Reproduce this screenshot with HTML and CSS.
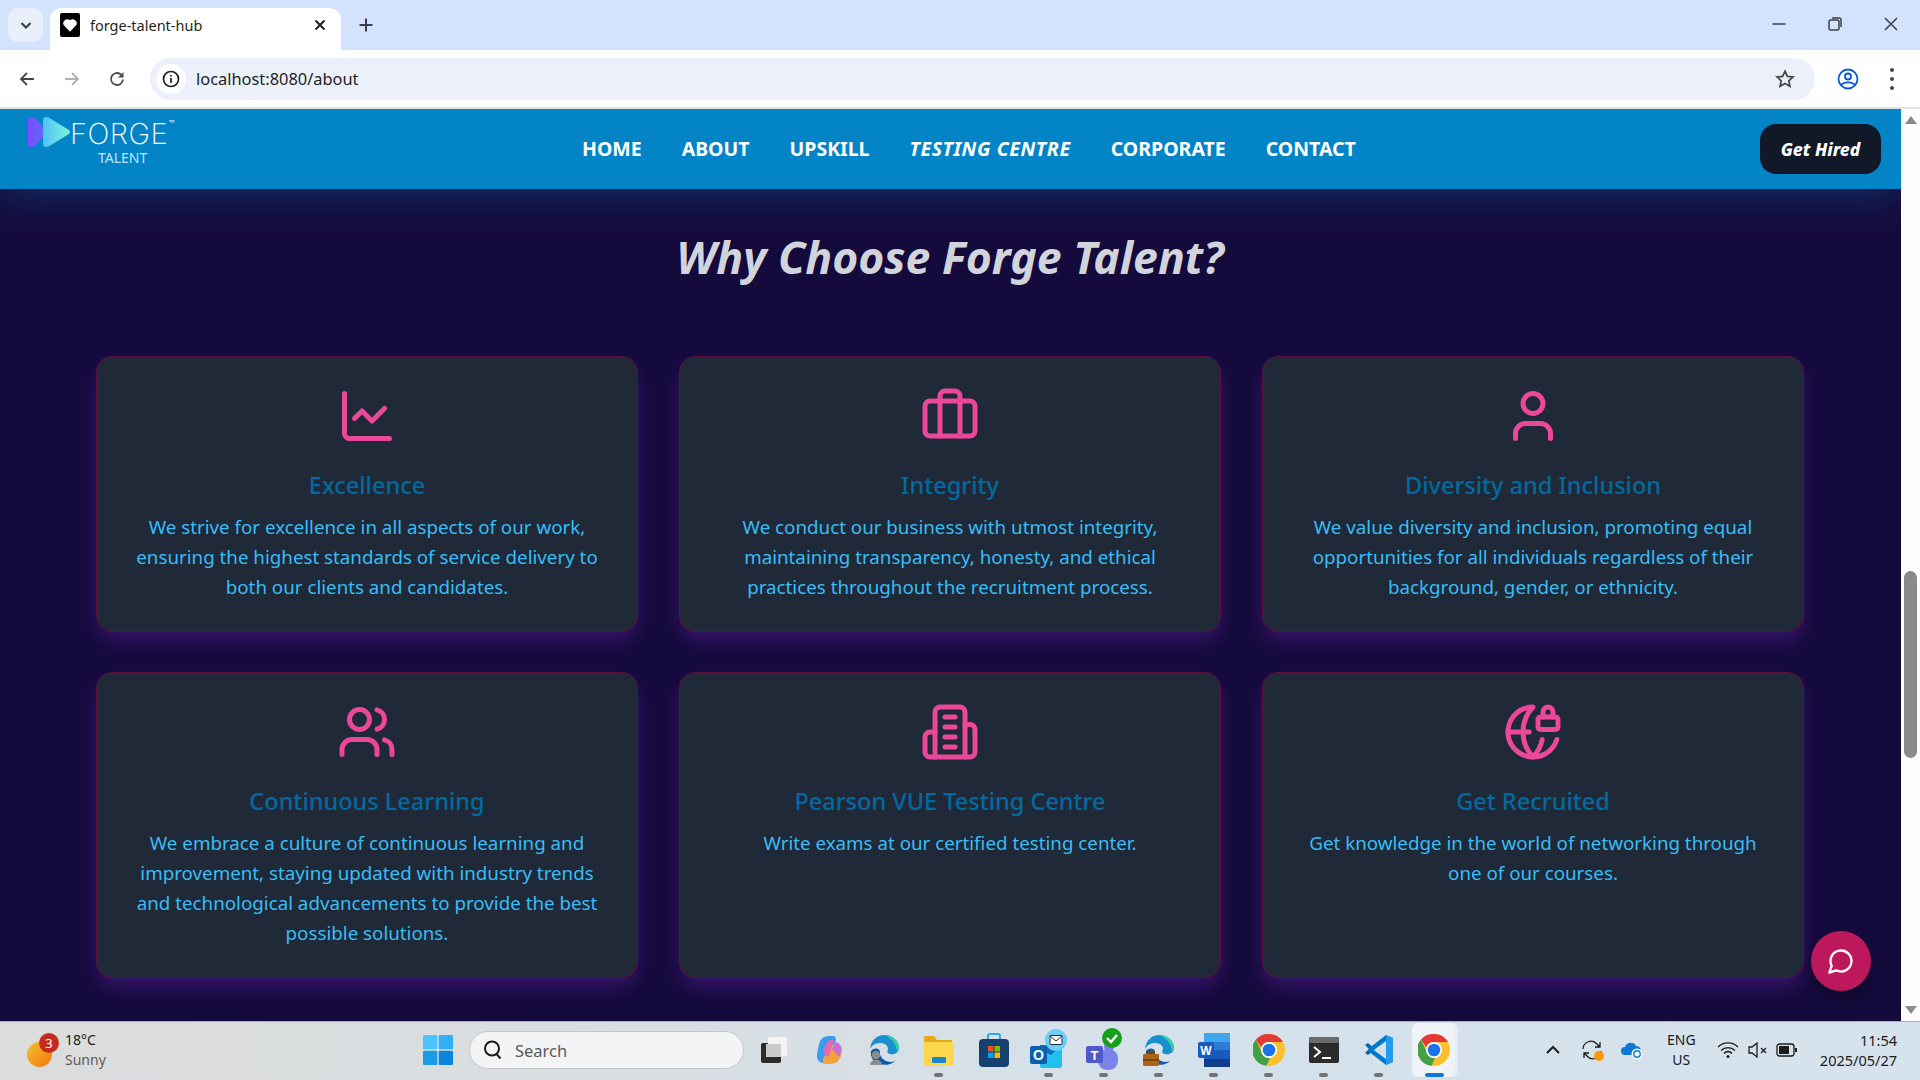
FILE: index.html
```html
<!DOCTYPE html>
<html lang="en">
<head>
    <meta charset="UTF-8">
    <title>forge-talent-hub</title>
    <link rel="stylesheet" href="styles.css">
</head>
<body>

    <div class="tabstrip">
        <div class="tab-search"><svg width="16" height="16" viewBox="0 0 16 16" class="ic-dark"><path d="M3.5 6l4.5 4.5L12.500 6"/></svg></div>
        <div class="tab">
            <div class="favicon"><svg width="16" height="16" viewBox="0 0 24 24"><path fill="#fff" d="M12 22 2.800 12.500A6 6 0 0 1 12 5a6 6 0 0 1 9.200 7.500z"/></svg></div>
            <span class="tab-title">forge-talent-hub</span>
            <svg class="tab-close" width="14" height="14" viewBox="0 0 14 14"><path d="M2.500 2.500l9 9M11.500 2.500l-9 9"/></svg>
        </div>
        <svg class="tab-new" width="16" height="16" viewBox="0 0 16 16"><path d="M8 1.500v13M1.500 8h13"/></svg>
        <div class="window-controls">
            <svg width="16" height="16" viewBox="0 0 16 16"><path d="M1.500 8h13"/></svg>
            <svg width="16" height="16" viewBox="0 0 16 16"><rect x="2" y="4" width="10" height="10" rx="2"/><path d="M5 2h7a2 2 0 0 1 2 2v7"/></svg>
            <svg width="16" height="16" viewBox="0 0 16 16"><path d="M2 2l12 12M14 2L2 14"/></svg>
        </div>
    </div>

    <div class="toolbar">
        <svg class="nav-ic" width="18" height="18" viewBox="0 0 18 18"><path d="M16 9H3M9 3L3 9l6 6"/></svg>
        <svg class="nav-ic nav-off" width="18" height="18" viewBox="0 0 18 18"><path d="M2 9h13M9 3l6 6-6 6"/></svg>
        <svg class="nav-ic" width="18" height="18" viewBox="0 0 18 18"><path d="M15 9.500A6 6 0 1 1 13 4.500"/><path class="solid" d="M15.500 2v5.500H10z"/></svg>
        <div class="omnibox">
            <div class="site-info"><svg width="20" height="20" viewBox="0 0 20 20"><circle cx="10" cy="10" r="7.500"/><path d="M10 9v5M10 6v1.500"/></svg></div>
            <span class="url">localhost:8080/about</span>
            <svg class="star" width="22" height="22" viewBox="0 0 24 24"><path d="M12 3.500l2.600 5.600 6.100.7-4.500 4.100 1.200 6L12 17l-5.400 2.900 1.200-6-4.500-4.100 6.100-.7z"/></svg>
        </div>
        <svg class="profile" width="22" height="22" viewBox="0 0 22 22"><circle cx="11" cy="11" r="9.500"/><circle cx="11" cy="8.500" r="3"/><path d="M4.500 17c2-3.500 11-3.500 13 0"/></svg>
        <div class="menu-dots"><i></i><i></i><i></i></div>
    </div>

    <div class="viewport">
        <div class="page">
            <header class="site-header">
                <div class="logo">
                    <div class="logo-top">
                        <svg width="46" height="32" viewBox="0 0 46 32">
                            <defs>
                                <linearGradient id="lg1" x1="0" y1="0" x2="1" y2="0"><stop offset="0" stop-color="#7c4dff"/><stop offset="1" stop-color="#5a6cf5"/></linearGradient>
                                <linearGradient id="lg2" x1="0" y1="0" x2="1" y2="0"><stop offset="0" stop-color="#4fc3f7"/><stop offset="1" stop-color="#7cf0d8"/></linearGradient>
                            </defs>
                            <path fill="url(#lg1)" d="M1 4q0-3 3-3 3 0 5 2l9 10q2 3 0 6L9 29q-2 2-5 2-3 0-3-3z"/>
                            <path fill="url(#lg2)" d="M16 4q0-3 3-3 3 0 5 2l18 11q2 2 0 4L24 29q-2 2-5 2-3 0-3-3z"/>
                        </svg>
                        <span class="logo-forge">FORGE</span>
                        <span class="logo-tm">™</span>
                    </div>
                    <div class="logo-talent">TALENT</div>
                </div>
                <nav class="main-nav">
                    <a href="#">HOME</a>
                    <a href="#">ABOUT</a>
                    <a href="#">UPSKILL</a>
                    <a href="#" class="current">TESTING CENTRE</a>
                    <a href="#">CORPORATE</a>
                    <a href="#">CONTACT</a>
                </nav>
                <button class="hire-btn">Get Hired</button>
            </header>

            <section class="why">
                <h2>Why Choose Forge Talent?</h2>
                <div class="card-grid">
                    <div class="card">
                        <svg class="card-ic" viewBox="0 0 24 24"><path d="M3 3v16a2 2 0 0 0 2 2h16"/><path d="m19 9-5 5-4-4-3 3"/></svg>
                        <h3>Excellence</h3>
                        <p>We strive for excellence in all aspects of our work, ensuring the highest standards of service delivery to both our clients and candidates.</p>
                    </div>
                    <div class="card">
                        <svg class="card-ic" viewBox="0 0 24 24"><path d="M16 20V4a2 2 0 0 0-2-2h-4a2 2 0 0 0-2 2v16"/><rect width="20" height="14" x="2" y="6" rx="2"/></svg>
                        <h3>Integrity</h3>
                        <p>We conduct our business with utmost integrity, maintaining transparency, honesty, and ethical practices throughout the recruitment process.</p>
                    </div>
                    <div class="card">
                        <svg class="card-ic" viewBox="0 0 24 24"><path d="M19 21v-2a4 4 0 0 0-4-4H9a4 4 0 0 0-4 4v2"/><circle cx="12" cy="7" r="4"/></svg>
                        <h3>Diversity and Inclusion</h3>
                        <p>We value diversity and inclusion, promoting equal opportunities for all individuals regardless of their background, gender, or ethnicity.</p>
                    </div>
                    <div class="card">
                        <svg class="card-ic" viewBox="0 0 24 24"><path d="M16 21v-2a4 4 0 0 0-4-4H6a4 4 0 0 0-4 4v2"/><circle cx="9" cy="7" r="4"/><path d="M22 21v-2a4 4 0 0 0-3-3.870"/><path d="M16 3.130a4 4 0 0 1 0 7.750"/></svg>
                        <h3>Continuous Learning</h3>
                        <p>We embrace a culture of continuous learning and improvement, staying updated with industry trends and technological advancements to provide the best possible solutions.</p>
                    </div>
                    <div class="card">
                        <svg class="card-ic" viewBox="0 0 24 24"><path d="M6 22V4a2 2 0 0 1 2-2h8a2 2 0 0 1 2 2v18Z"/><path d="M6 12H4a2 2 0 0 0-2 2v6a2 2 0 0 0 2 2h2"/><path d="M18 9h2a2 2 0 0 1 2 2v9a2 2 0 0 1-2 2h-2"/><path d="M10 6h4M10 10h4M10 14h4M10 18h4"/></svg>
                        <h3>Pearson VUE Testing Centre</h3>
                        <p>Write exams at our certified testing center.</p>
                    </div>
                    <div class="card">
                        <svg class="card-ic" viewBox="0 0 24 24"><path d="M15.686 15A14.500 14.500 0 0 1 12 22a14.500 14.500 0 0 1 0-20 10 10 0 1 0 9.542 13"/><path d="M2 12h8.500"/><path d="M20 6V4a2 2 0 1 0-4 0v2"/><rect width="8" height="5" x="14" y="6" rx="1"/></svg>
                        <h3>Get Recruited</h3>
                        <p>Get knowledge in the world of networking through one of our courses.</p>
                    </div>
                </div>
            </section>

            <button class="chat-btn"><svg width="28" height="28" viewBox="0 0 24 24"><path d="M7.900 20A9 9 0 1 0 4 16.100L2 22Z"/></svg></button>
        </div>
        <div class="scrollbar">
            <svg width="14" height="10" viewBox="0 0 14 10"><path d="M7 1l6 8H1z"/></svg>
            <div class="scroll-track"><div class="scroll-thumb"></div></div>
            <svg width="14" height="10" viewBox="0 0 14 10"><path d="M1 1h12L7 9z"/></svg>
        </div>
    </div>

    <footer class="taskbar">
        <div class="weather">
            <div class="weather-ic"><span class="sun"></span><span class="badge">3</span></div>
            <div class="weather-text"><span>18°C</span><span class="muted">Sunny</span></div>
        </div>
        <svg class="win-logo" width="30" height="30" viewBox="0 0 30 30">
            <rect width="14.300" height="14.300" rx="1" fill="#4cc2ff"/><rect x="15.700" width="14.300" height="14.300" rx="1" fill="#33b0f5"/>
            <rect y="15.700" width="14.300" height="14.300" rx="1" fill="#1a9be8"/><rect x="15.700" y="15.700" width="14.300" height="14.300" rx="1" fill="#0a84dc"/>
        </svg>
        <div class="search-box">
            <svg width="22" height="22" viewBox="0 0 22 22"><circle cx="10" cy="9.500" r="7"/><path d="M14.500 15l4 4.500"/></svg>
            <span>Search</span>
        </div>
        <div class="apps">
            <div class="app"><svg width="28" height="28" viewBox="0 0 28 28"><rect x="1" y="7" width="20" height="20" rx="2" fill="#2b2b2b"/><rect x="8" y="1" width="19" height="19" rx="2" fill="#f4f4f4"/><rect x="6" y="8" width="15" height="13" fill="#c9c9c9"/></svg></div>
            <div class="app"><svg width="32" height="32" viewBox="0 0 32 32"><path fill="#3b9df0" d="M6 10q2-8 10-8h4q3 0 3 4L17 24q-2 6-8 5-6-2-5-9z"/><path fill="#f7a13c" d="M13 30q-4 0-3-5l4-9q2-5 6-5h6q4 1 3 7-2 12-11 12z"/><path fill="#e66ab0" d="M10 18q2-8 7-12h4l-6 18z"/><path fill="#c66fe0" d="M23 8q5 1 5 7 0 5-2 8l-7-8z"/></svg></div>
            <div class="app"><svg width="32" height="32" viewBox="0 0 32 32"><path fill="#1a8fd0" d="M2 15C3 6 9 1 16 1c9 0 15 6 15 13 0 5-5 7-9 6-3 0-3-3-2-5 0-4-4-6-8-6-4 0-8 2-10 6z"/><path fill="#37d0a0" d="M16 1c9 0 15 6 15 13 0 2-1 3-2 4 0-8-6-15-13-17z"/><path fill="#0c59a4" d="M12 30c-6-1-10-7-9-13 3-4 9-3 9 1-1 5 5 10 11 10 2 0 4-1 5-2-3 4-10 6-16 4z"/><circle cx="8" cy="21" r="4" fill="#8d8d8d"/><path fill="#8d8d8d" d="M2 31c0-7 12-7 12 0z"/></svg></div>
            <div class="app dot"><svg width="30" height="32" viewBox="0 0 30 32"><path fill="#e8a917" d="M0 4q0-2 2-2h8l3 4h15v8H0z"/><path fill="#fcd84e" d="M0 8h28q2 0 2 2v20q0 2-2 2H2q-2 0-2-2z"/><rect x="8" y="23" width="14" height="6" rx="1" fill="#1a86d0"/></svg></div>
            <div class="app"><svg width="30" height="34" viewBox="0 0 30 34"><path fill="none" stroke="#35a7e8" stroke-width="2" d="M9 8V3q0-2 2-2h8q2 0 2 2v5"/><rect y="6" width="30" height="28" rx="4" fill="#15406f"/><rect x="9" y="13" width="5.500" height="5.500" fill="#f25022"/><rect x="15.500" y="13" width="5.500" height="5.500" fill="#7fba00"/><rect x="9" y="19.500" width="5.500" height="5.500" fill="#00a4ef"/><rect x="15.500" y="19.500" width="5.500" height="5.500" fill="#ffb900"/></svg></div>
            <div class="app dot"><svg width="38" height="42" viewBox="0 0 38 42"><path fill="#21c0ee" d="M10 24l22-9v22q0 2-2 2H12q-2 0-2-2z"/><path fill="#0c6fc0" d="M10 16h14l8 0-11 10-11-5z"/><rect y="17" width="17" height="18" rx="2" fill="#0a5fb0"/><text class="ms-letter" x="8.500" y="31" font-size="14">O</text><circle cx="26" cy="11" r="11" fill="#6ccdf7"/><rect x="20" y="6.500" width="12" height="9" rx="1" fill="#fff" stroke="#1b2a3a" stroke-width="1"/><path d="M20 7l6 5 6-5" fill="none" stroke="#1b2a3a" stroke-width="1"/></svg></div>
            <div class="app dot"><svg width="38" height="44" viewBox="0 0 38 44"><circle cx="24" cy="19" r="5" fill="#7b83eb"/><rect x="13" y="21" width="20" height="21" rx="9" fill="#7b83eb"/><rect x="1" y="18" width="17" height="17" rx="2" fill="#5059c9"/><text class="ms-letter" x="9.500" y="31.500" font-size="13">T</text><circle cx="27" cy="10" r="10" fill="#14a01a"/><path d="M22 10l4 4 6-7" fill="none" stroke="#fff" stroke-width="2.400"/></svg></div>
            <div class="app dot"><svg width="32" height="32" viewBox="0 0 32 32"><path fill="#1a8fd0" d="M2 15C3 6 9 1 16 1c9 0 15 6 15 13 0 5-5 7-9 6-3 0-3-3-2-5 0-4-4-6-8-6-4 0-8 2-10 6z"/><path fill="#37d0a0" d="M16 1c9 0 15 6 15 13 0 2-1 3-2 4 0-8-6-15-13-17z"/><path fill="#0c59a4" d="M12 30c-6-1-10-7-9-13 3-4 9-3 9 1-1 5 5 10 11 10 2 0 4-1 5-2-3 4-10 6-16 4z"/><rect x="0" y="20" width="16" height="12" rx="1" fill="#a9651c"/><path stroke="#7a4412" stroke-width="2" fill="none" d="M5 20v-2h6v2M0 26h16"/></svg></div>
            <div class="app dot"><svg width="32" height="34" viewBox="0 0 32 34"><rect x="6" width="26" height="34" rx="2" fill="#2b7cd3"/><rect x="6" width="26" height="9" fill="#41a5ee"/><rect x="6" y="17" width="26" height="9" fill="#185abd"/><rect x="6" y="26" width="26" height="8" fill="#103f91"/><rect y="9" width="16" height="16" rx="2" fill="#185abd"/><text class="ms-letter" x="8" y="22" font-size="12">W</text></svg></div>
            <div class="app dot"><svg class="chrome" width="32" height="32" viewBox="0 0 32 32"><circle cx="16" cy="16" r="16" fill="#fbc02d"/><path fill="#e53935" d="M16 0a16 16 0 0 1 13.900 8H16a8 8 0 0 0-7.600 5.500L3 5.500A16 16 0 0 1 16 0z"/><path fill="#43a047" d="M3 5.500l6.500 14.500a8 8 0 0 0 7.500 4l-3.500 7.800A16 16 0 0 1 3 5.500z"/><circle cx="16" cy="16" r="8" fill="#fff"/><circle cx="16" cy="16" r="6.300" fill="#1a73e8"/></svg></div>
            <div class="app dot"><svg width="30" height="26" viewBox="0 0 30 26"><rect width="30" height="26" rx="2" fill="#2b2b2b"/><rect width="30" height="6" rx="2" fill="#6b6b6b"/><path d="M5 10l6 5-6 5" fill="none" stroke="#fff" stroke-width="2"/><path d="M13 21h9" stroke="#fff" stroke-width="2"/></svg></div>
            <div class="app dot"><svg width="30" height="30" viewBox="0 0 30 30"><path fill="#0065a9" d="M1 10l3-2 7 6-7 6-3-2 4-4z"/><path fill="#007acc" d="M22 0l7 3v24l-7 3L4 16l3-3 15 11V6L7 17l-3-3z"/><path fill="#1f9cf0" d="M22 0l7 3v24l-7 3z"/></svg></div>
            <div class="app active"><svg class="chrome" width="32" height="32" viewBox="0 0 32 32"><circle cx="16" cy="16" r="16" fill="#fbc02d"/><path fill="#e53935" d="M16 0a16 16 0 0 1 13.900 8H16a8 8 0 0 0-7.600 5.500L3 5.500A16 16 0 0 1 16 0z"/><path fill="#43a047" d="M3 5.500l6.500 14.500a8 8 0 0 0 7.500 4l-3.500 7.800A16 16 0 0 1 3 5.500z"/><circle cx="16" cy="16" r="8" fill="#fff"/><circle cx="16" cy="16" r="6.300" fill="#1a73e8"/></svg></div>
        </div>
        <div class="tray">
            <svg class="tray-ic" width="16" height="16" viewBox="0 0 16 16"><path d="M2 11l6-6 6 6"/></svg>
            <div class="tray-sync"><svg class="tray-ic" width="22" height="22" viewBox="0 0 22 22"><path d="M2 10a8 8 0 0 1 14-5l3 3M19 3v5h-5M20 12a8 8 0 0 1-14 5l-3-3M3 19v-5h5"/></svg><i></i></div>
            <svg width="22" height="20" viewBox="0 0 22 20"><path fill="#0f78d4" d="M4 15a4 4 0 0 1 0-8 6 6 0 0 1 11-1 5 5 0 0 1 3 9z"/><circle cx="16" cy="14" r="5.500" fill="#fff"/><circle cx="16" cy="14" r="3.200" fill="none" stroke="#0f78d4" stroke-width="1.400"/></svg>
            <div class="lang"><span>ENG</span><span>US</span></div>
            <svg class="tray-ic" width="22" height="18" viewBox="0 0 22 18"><path d="M1 6a14 14 0 0 1 20 0M4 9.500a10 10 0 0 1 14 0M7 12.500a5 5 0 0 1 8 0"/><circle class="solid" cx="11" cy="15.500" r="1.500"/></svg>
            <svg class="tray-ic" width="20" height="18" viewBox="0 0 20 18"><path d="M1 6v6h3l5 4V2L4 6zM13 7l5 5M18 7l-5 5"/></svg>
            <svg class="tray-ic" width="22" height="14" viewBox="0 0 22 14"><rect x="1" y="1" width="17" height="12" rx="2.500"/><rect class="solid" x="3" y="3" width="10" height="8"/><rect class="solid" x="19" y="5" width="2" height="4"/></svg>
            <div class="clock"><span>11:54</span><span>2025/05/27</span></div>
        </div>
    </footer>

</body>
</html>
```

FILE: styles.css
```css
* {
    box-sizing: border-box;
}
html, body {
    margin: 0;
    height: 100%;
}
body {
    width: 1920px;
    height: 1080px;
    overflow: hidden;
    display: flex;
    flex-direction: column;
    font-family: "Noto Sans", "Open Sans", sans-serif;
    background: #fff;
}
svg {
    display: block;
    flex: none;
}

/* browser tabs */
.tabstrip {
    height: 50px;
    background: #d3e3fd;
    display: flex;
    align-items: flex-end;
    padding-left: 8px;
}
.tabstrip svg path, .tabstrip svg rect {
    fill: none;
    stroke: #3c4043;
    stroke-width: 1.500;
}
.tabstrip .favicon svg path {
    fill: #fff;
    stroke: none;
}
.tab-search {
    width: 35px;
    height: 34px;
    margin-bottom: 8px;
    border-radius: 10px;
    background: #e9effb;
    display: flex;
    align-items: center;
    justify-content: center;
}
.tabstrip .ic-dark path {
    stroke-width: 2.200;
}
.tab {
    width: 291px;
    height: 42px;
    margin-left: 7px;
    background: #fff;
    border-radius: 12px 12px 0 0;
    display: flex;
    align-items: center;
    padding: 0 14px 8px 10px;
}
.favicon {
    width: 20px;
    height: 24px;
    background: #000;
    border-radius: 2px;
    display: flex;
    align-items: center;
    justify-content: center;
}
.tab-title {
    flex: 1;
    margin-left: 10px;
    font-size: 14.500px;
    color: #1f1f1f;
}
.tabstrip .tab-close path {
    stroke: #222;
    stroke-width: 2;
}
.tab-new {
    margin: 0 0 17px 17px;
}
.tabstrip .tab-new path {
    stroke-width: 2;
}
.window-controls {
    margin-left: auto;
    height: 100%;
    display: flex;
    align-items: center;
    gap: 40px;
    padding: 0 21px 2px 0;
}

/* address bar */
.toolbar {
    height: 59px;
    background: #fff;
    border-radius: 10px 10px 0 0;
    border-bottom: 2px solid #e3e3e3;
    display: flex;
    align-items: center;
    padding: 0 19px 0 18px;
}
.nav-ic {
    margin-right: 27px;
}
.nav-ic path {
    fill: none;
    stroke: #474747;
    stroke-width: 1.800;
}
.nav-ic .solid {
    fill: #474747;
    stroke: none;
}
.nav-off path {
    stroke: #b0b0b0;
}
.omnibox {
    width: 1665px;
    height: 42px;
    margin-left: -3px;
    background: #ebf0fa;
    border-radius: 21px;
    display: flex;
    align-items: center;
    padding: 0 19px 0 6px;
}
.site-info {
    width: 30px;
    height: 30px;
    background: #fff;
    border-radius: 50%;
    display: flex;
    align-items: center;
    justify-content: center;
}
.site-info circle, .site-info path {
    fill: none;
    stroke: #1f1f1f;
    stroke-width: 1.700;
}
.url {
    flex: 1;
    margin-left: 10px;
    font-size: 16.400px;
    color: #1f1f1f;
}
.star path {
    fill: none;
    stroke: #474747;
    stroke-width: 1.900;
}
.profile {
    margin-left: 22px;
}
.profile circle, .profile path {
    fill: none;
    stroke: #0b57d0;
    stroke-width: 1.800;
}
.menu-dots {
    margin-left: 31px;
    display: flex;
    flex-direction: column;
    gap: 5px;
}
.menu-dots i {
    width: 4px;
    height: 4px;
    border-radius: 50%;
    background: #474747;
}

/* page area */
.viewport {
    height: 912px;
    display: flex;
}
.page {
    position: relative;
    width: 1901px;
    background: #150a3c;
    overflow: hidden;
}
.site-header {
    position: relative;
    height: 80px;
    background: #0284c7;
    box-shadow: 0 8px 40px rgba(2, 132, 199, 0.3);
    display: flex;
    align-items: center;
    justify-content: space-between;
    padding: 0 20px 0 27px;
}
.logo {
    width: 152px;
    align-self: flex-start;
    padding-top: 7px;
    color: #e8f6fd;
}
.logo-top {
    display: flex;
    align-items: flex-start;
}
.logo-forge {
    font-family: Inter, sans-serif;
    font-weight: 200;
    font-size: 29px;
    line-height: 24px;
    margin: 6px 0 0 -3px;
    color: #fff;
    letter-spacing: 0.500px;
}
.logo-tm {
    font-size: 7px;
    line-height: 8px;
    margin: 3px 0 0 1px;
}
.logo-talent {
    font-size: 14px;
    line-height: 16px;
    margin: 2px 0 0 71px;
    color: #bfe6f8;
}
.main-nav {
    display: flex;
    gap: 40px;
    margin-left: 403px;
    margin-right: auto;
}
.main-nav a {
    color: #fff;
    font-weight: 700;
    font-size: 19.500px;
    line-height: 28px;
    text-decoration: none;
}
.main-nav a.current {
    font-style: italic;
    letter-spacing: 0.600px;
}
.hire-btn {
    width: 121px;
    height: 50px;
    border: none;
    border-radius: 16px;
    background: #111827;
    color: #fff;
    font-family: "Noto Sans", sans-serif;
    font-size: 17.500px;
    font-style: italic;
    font-weight: 800;
}

.why {
    padding: 0 97px 0 96px;
}
.why h2 {
    margin: 0;
    padding: 40px 0 0;
    text-align: center;
    color: #d1d5db;
    font-size: 44.600px;
    line-height: 56px;
    font-style: italic;
    font-weight: 700;
}
.card-grid {
    margin-top: 71px;
    display: grid;
    grid-template-columns: repeat(3, 1fr);
    column-gap: 41px;
    row-gap: 40px;
}
.card {
    background: #1f2937;
    border: 1px solid #5f0f40;
    border-radius: 16px;
    box-shadow: 0 10px 20px -2px rgba(147, 51, 234, 0.28);
    padding: 29px 30px 29px;
    text-align: center;
}
.card-ic {
    width: 60px;
    height: 60px;
    margin: 0 auto;
    fill: none;
    stroke: #ec4899;
    stroke-width: 2;
    stroke-linecap: round;
    stroke-linejoin: round;
}
.card h3 {
    margin: 23px 0 11px;
    color: #0369a1;
    font-size: 23.500px;
    line-height: 32px;
    font-weight: 500;
}
.card p {
    margin: 0;
    color: #38bdf8;
    font-size: 18.750px;
    line-height: 30px;
}
.chat-btn {
    position: absolute;
    left: 1811px;
    top: 822px;
    width: 60px;
    height: 60px;
    border: none;
    border-radius: 50%;
    background: #be185d;
    box-shadow: 0 8px 16px rgba(0, 0, 0, 0.25);
    display: flex;
    align-items: center;
    justify-content: center;
    padding: 0;
}
.chat-btn path {
    fill: none;
    stroke: #fff;
    stroke-width: 2;
    stroke-linejoin: round;
}

/* scrollbar */
.scrollbar {
    width: 19px;
    background: #fdfdfd;
    display: flex;
    flex-direction: column;
    align-items: center;
    padding: 6px 0;
}
.scrollbar path {
    fill: #8a8a8a;
}
.scroll-track {
    flex: 1;
    width: 100%;
    padding-top: 446px;
}
.scroll-thumb {
    width: 13px;
    height: 187px;
    margin: 0 auto;
    background: #8a8a8a;
    border-radius: 7px;
}

/* taskbar */
.taskbar {
    height: 59px;
    background: linear-gradient(90deg, #dcdcdc 0%, #d9dee1 30%, #d5e1ea 60%, #d6e2ec 100%);
    border-top: 1px solid #a9aeb2;
    display: flex;
    align-items: center;
    padding-bottom: 2px;
    color: #1b1b1b;
}
.weather {
    width: 423px;
    display: flex;
    align-items: center;
    padding-left: 27px;
    font-size: 14px;
}
.weather-ic {
    position: relative;
    width: 37px;
    height: 34px;
}
.sun {
    position: absolute;
    left: 0;
    top: 9px;
    width: 25px;
    height: 25px;
    border-radius: 50%;
    background: linear-gradient(135deg, #f2c12c, #f5740f);
}
.badge {
    position: absolute;
    left: 12px;
    top: 0;
    width: 20px;
    height: 20px;
    border-radius: 50%;
    background: #c42b1c;
    color: #fff;
    font-size: 13px;
    line-height: 20px;
    text-align: center;
}
.weather-text {
    display: flex;
    flex-direction: column;
    line-height: 20px;
    margin-left: 1px;
}
.muted {
    color: #5c5c5c;
}
.search-box {
    width: 275px;
    height: 38px;
    margin-left: 16px;
    background: #f3f4f6;
    border: 1px solid #c4c8cc;
    border-radius: 19px;
    display: flex;
    align-items: center;
    padding-left: 12px;
    font-size: 16.500px;
    color: #5a5a5a;
}
.search-box svg {
    margin-right: 11px;
}
.search-box circle, .search-box path {
    fill: none;
    stroke: #1b1b1b;
    stroke-width: 2;
}
.apps {
    display: flex;
    margin-left: 2px;
}
.app {
    position: relative;
    width: 55px;
    height: 54px;
    display: flex;
    align-items: center;
    justify-content: center;
}
.app.dot::after {
    content: "";
    position: absolute;
    left: 23px;
    bottom: 0;
    width: 9px;
    height: 4px;
    border-radius: 2px;
    background: #6e7276;
}
.app.active {
    background: #f0f4f8;
    border-radius: 6px;
    box-shadow: 3px 0 0 #e6ecf1;
    width: 43px;
    margin-left: 6px;
}
.app.active::after {
    content: "";
    position: absolute;
    left: 13px;
    bottom: 0;
    width: 19px;
    height: 4px;
    border-radius: 2px;
    background: #0f78d4;
}
.ms-letter {
    fill: #fff;
    font-family: "Liberation Sans", sans-serif;
    font-weight: 700;
    text-anchor: middle;
}
.tray {
    flex: 1;
    display: flex;
    align-items: center;
    padding-left: 90px;
}
.tray-ic path, .tray-ic rect {
    fill: none;
    stroke: #1b1b1b;
    stroke-width: 1.300;
}
.tray-ic circle.solid, .tray-ic rect.solid {
    fill: #1b1b1b;
    stroke: none;
}
.tray > svg:first-child path {
    stroke-width: 2;
}
.tray-sync {
    position: relative;
    margin-left: 20px;
}
.tray-sync i {
    position: absolute;
    right: -1px;
    bottom: 0;
    width: 10px;
    height: 10px;
    border-radius: 50%;
    background: #f90;
}
.tray > svg:nth-child(3) {
    margin-left: 18px;
}
.lang {
    margin: 0 21px 0 24px;
    display: flex;
    flex-direction: column;
    align-items: center;
    font-size: 14px;
    line-height: 20px;
}
.tray > svg:nth-child(6) {
    margin-left: 9px;
}
.tray > svg:nth-child(7) {
    margin-left: 8px;
}
.clock {
    margin-left: auto;
    padding-right: 23px;
    display: flex;
    flex-direction: column;
    align-items: flex-end;
    font-size: 14.500px;
    line-height: 20px;
}
```
